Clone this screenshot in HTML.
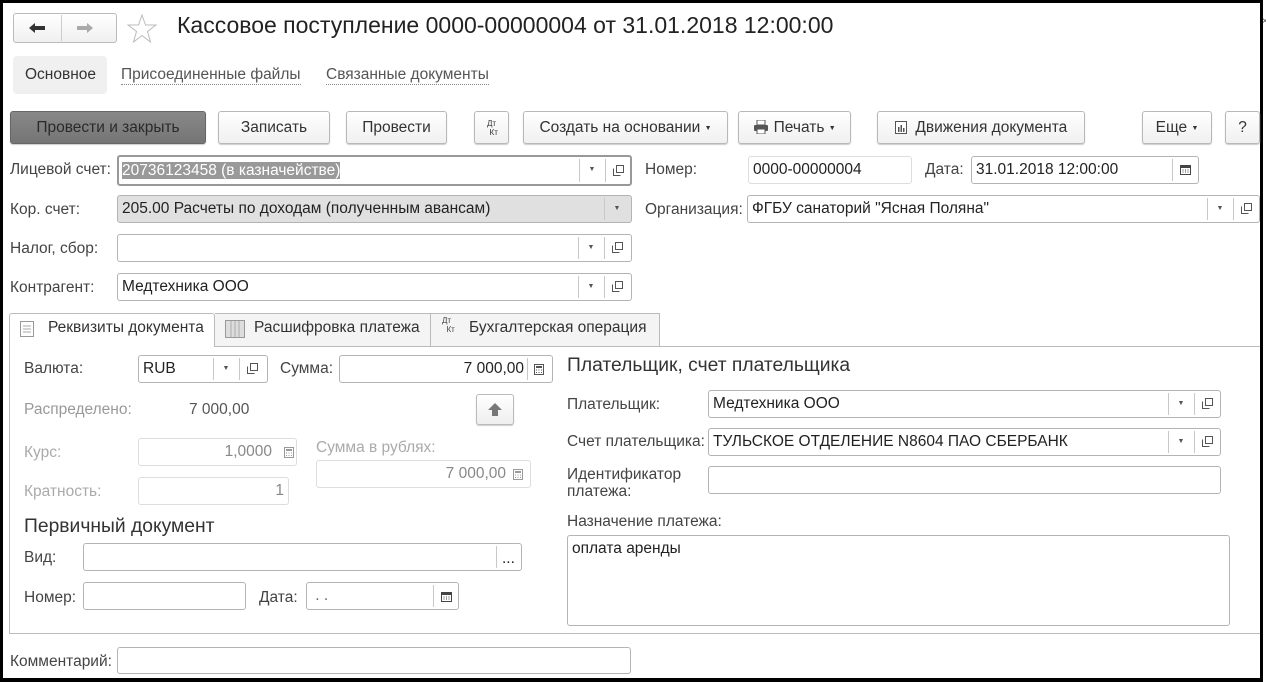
<!DOCTYPE html>
<html><head><meta charset="utf-8"><style>
*{box-sizing:border-box;margin:0;padding:0}
body{width:1266px;height:682px;position:relative;background:#fff;font-family:"Liberation Sans",Arial,sans-serif;font-size:15.5px;color:#333;overflow:hidden}
.a{position:absolute;white-space:nowrap}
.f{position:absolute;border:1px solid #b4b4b4;border-radius:3px;background:#fff;height:28px;line-height:26px;padding-left:4px;color:#222}
.f.dis{border-color:#ddd;color:#888}
.btn{position:absolute;border:1px solid #b8b8b8;border-radius:3px;background:linear-gradient(#fff,#f0f0f0);height:33px;top:111px;line-height:31px;text-align:center;color:#333;box-shadow:0 1px 1px #ccc}
.sep{position:absolute;top:2px;bottom:2px;border-left:1px solid #c8c8c8}
.dd{position:absolute;top:0;width:26px;height:26px;text-align:center;font-size:7px;color:#555;line-height:26px}
.cp{position:absolute;top:7px;width:11px;height:11px}
.lbl{position:absolute;color:#444}
.g{color:#999}
.ar{font-size:7px;vertical-align:2px}
</style></head><body>
<div class="a" style="left:0;top:0;width:1263px;height:3px;background:#000"></div>
<div class="a" style="left:0;top:0;width:3px;height:682px;background:#000"></div>
<div class="a" style="left:1260px;top:0;width:3px;height:682px;background:#000"></div>
<div class="a" style="left:0;top:678px;width:1263px;height:4px;background:#000"></div>
<div class="a" style="left:1262px;top:16px;font-size:10px;color:#555">×</div>

<div class="a" style="left:13px;top:13px;width:104px;height:30px;border:1px solid #bbb;border-radius:3px;background:linear-gradient(#fff,#f0f0f0)"></div>
<div class="a" style="left:61px;top:15px;height:26px;border-left:1px solid #ccc"></div>
<svg class="a" style="left:28px;top:22px" width="18" height="12" viewBox="0 0 18 12"><path d="M1 6l6-5v3h10v4H7v3z" fill="#333"/></svg>
<svg class="a" style="left:76px;top:22px" width="18" height="12" viewBox="0 0 18 12"><path d="M17 6l-6-5v3H1v4h10v3z" fill="#aaa"/></svg>
<svg class="a" style="left:127px;top:14px" width="30" height="29" viewBox="0 0 30 29"><polygon points="15,1 18.5,11 29,11 20.5,17.5 23.5,28 15,21.5 6.5,28 9.5,17.5 1,11 11.5,11" fill="none" stroke="#bbb" stroke-width="1"/></svg>
<div class="a" style="left:177px;top:12px;font-size:23px;color:#222">Кассовое поступление 0000-00000004 от 31.01.2018 12:00:00</div>

<div class="a" style="left:13px;top:56px;width:94px;height:38px;background:#f0f0f0;border-radius:4px"></div>
<div class="a" style="left:25px;top:66px;color:#333">Основное</div>
<div class="a" style="left:121px;top:66px;color:#555;border-bottom:1px dotted #888;line-height:18px">Присоединенные файлы</div>
<div class="a" style="left:326px;top:66px;color:#555;border-bottom:1px dotted #888;line-height:18px">Связанные документы</div>

<div class="btn" style="left:10px;width:196px;background:linear-gradient(#888,#757575);border-color:#666;color:#2a2a2a">Провести и закрыть</div>
<div class="btn" style="left:218px;width:112px">Записать</div>
<div class="btn" style="left:346px;width:101px">Провести</div>
<div class="btn" style="left:474px;width:35px;font-size:8px;line-height:9px;padding-top:7px">Дт<br>&nbsp;&nbsp;Кт</div>
<div class="btn" style="left:523px;width:205px">Создать на основании <span class="ar">&#9660;</span></div>
<div class="btn" style="left:738px;width:113px"><svg width="16" height="14" style="vertical-align:-2px" viewBox="0 0 16 14"><rect x="4" y="0" width="8" height="5" fill="#fff" stroke="#555"/><rect x="1" y="5" width="14" height="6" rx="1" fill="#555"/><rect x="4" y="9" width="8" height="5" fill="#fff" stroke="#555"/></svg> Печать <span class="ar">&#9660;</span></div>
<div class="btn" style="left:877px;width:208px"><svg width="12" height="13" style="vertical-align:-2px" viewBox="0 0 12 13"><rect x="0.5" y="0.5" width="11" height="12" fill="#fff" stroke="#555"/><rect x="3" y="6" width="1.5" height="5" fill="#555"/><rect x="5.5" y="4" width="1.5" height="7" fill="#555"/><rect x="8" y="7" width="1.5" height="4" fill="#555"/></svg>&nbsp; Движения документа</div>
<div class="btn" style="left:1142px;width:70px">Еще <span class="ar">&#9660;</span></div>
<div class="btn" style="left:1225px;width:35px">?</div>

<div class="lbl" style="left:10px;top:161px">Лицевой счет:</div>
<div class="f" style="left:117px;top:155px;width:515px;height:31px;border:2px solid #999;line-height:27px;padding-left:3px"><span style="background:#999;color:#fff">20736123458 (в казначействе)</span>
<div class="sep" style="left:460px"></div><div class="dd" style="left:460px">&#9660;</div><div class="sep" style="left:486px"></div>
<svg class="cp" style="left:494px;top:8px" viewBox="0 0 11 11"><path d="M3.5 .5h7v7h-7zM.5 3.5v7h7" fill="none" stroke="#555"/></svg></div>

<div class="lbl" style="left:645px;top:161px">Номер:</div>
<div class="f" style="left:748px;top:156px;width:164px;border-color:#ddd">0000-00000004</div>
<div class="lbl" style="left:925px;top:161px">Дата:</div>
<div class="f" style="left:971px;top:156px;width:228px">31.01.2018 12:00:00<div class="sep" style="left:200px"></div>
<svg class="a" style="left:208px;top:7px" width="11" height="11" viewBox="0 0 11 11"><rect x="0.5" y="1.5" width="10" height="9" fill="none" stroke="#444"/><rect x="0.5" y="1.5" width="10" height="2.5" fill="#444"/><path d="M2.5 6h1M5 6h1M7.5 6h1M2.5 8h1M5 8h1M7.5 8h1" stroke="#444"/></svg></div>

<div class="lbl" style="left:10px;top:201px">Кор. счет:</div>
<div class="f" style="left:117px;top:195px;width:515px;background:#e0e0e0">205.00 Расчеты по доходам (полученным авансам)<div class="sep" style="left:486px"></div><div class="dd" style="left:486px">&#9660;</div></div>
<div class="lbl" style="left:645px;top:201px">Организация:</div>
<div class="f" style="left:747px;top:195px;width:513px">ФГБУ санаторий "Ясная Поляна"<div class="sep" style="left:459px"></div><div class="dd" style="left:459px">&#9660;</div><div class="sep" style="left:485px"></div>
<svg class="cp" style="left:493px" viewBox="0 0 11 11"><path d="M3.5 .5h7v7h-7zM.5 3.5v7h7" fill="none" stroke="#555"/></svg></div>

<div class="lbl" style="left:10px;top:240px">Налог, сбор:</div>
<div class="f" style="left:117px;top:234px;width:515px"><div class="sep" style="left:460px"></div><div class="dd" style="left:460px">&#9660;</div><div class="sep" style="left:486px"></div>
<svg class="cp" style="left:494px" viewBox="0 0 11 11"><path d="M3.5 .5h7v7h-7zM.5 3.5v7h7" fill="none" stroke="#555"/></svg></div>

<div class="lbl" style="left:10px;top:279px">Контрагент:</div>
<div class="f" style="left:117px;top:273px;width:515px">Медтехника ООО<div class="sep" style="left:460px"></div><div class="dd" style="left:460px">&#9660;</div><div class="sep" style="left:486px"></div>
<svg class="cp" style="left:494px" viewBox="0 0 11 11"><path d="M3.5 .5h7v7h-7zM.5 3.5v7h7" fill="none" stroke="#555"/></svg></div>

<div class="a" style="left:215px;top:346px;width:1045px;border-top:1px solid #bbb"></div>
<div class="a" style="left:9px;top:313px;width:206px;height:34px;border:1px solid #bbb;border-bottom:none;background:#fff;border-radius:3px 3px 0 0"></div>
<div class="a" style="left:215px;top:313px;width:216px;height:33px;border:1px solid #bbb;border-left:none;border-bottom:none;background:#f4f4f4"></div>
<div class="a" style="left:431px;top:313px;width:229px;height:33px;border:1px solid #bbb;border-left:none;border-bottom:none;background:#f4f4f4"></div>
<svg class="a" style="left:20px;top:321px" width="14" height="16" viewBox="0 0 14 16"><rect x=".5" y=".5" width="13" height="15" fill="#fff" stroke="#999"/><path d="M3 5h8M3 8h8M3 11h8" stroke="#aaa"/></svg>
<div class="a" style="left:48px;top:319px;color:#333">Реквизиты документа</div>
<svg class="a" style="left:225px;top:320px" width="20" height="18" viewBox="0 0 20 18"><rect x=".5" y=".5" width="19" height="17" fill="#ddd" stroke="#999"/><path d="M6 1v16M10 1v16M14 1v16" stroke="#aaa"/></svg>
<div class="a" style="left:254px;top:319px;color:#333">Расшифровка платежа</div>
<div class="a" style="left:442px;top:316px;font-size:8px;line-height:9px;color:#444">Дт<br>&nbsp;&nbsp;Кт</div>
<div class="a" style="left:469px;top:319px;color:#333">Бухгалтерская операция</div>

<div class="a" style="left:9px;top:346px;height:288px;border-left:1px solid #bbb"></div>
<div class="a" style="left:9px;top:633px;width:1251px;border-top:1px solid #bbb"></div>

<div class="lbl" style="left:24px;top:360px">Валюта:</div>
<div class="f" style="left:138px;top:355px;width:130px">RUB<div class="sep" style="left:74px"></div><div class="dd" style="left:74px">&#9660;</div><div class="sep" style="left:100px"></div>
<svg class="cp" style="left:108px" viewBox="0 0 11 11"><path d="M3.5 .5h7v7h-7zM.5 3.5v7h7" fill="none" stroke="#555"/></svg></div>
<div class="lbl" style="left:280px;top:360px">Сумма:</div>
<div class="f" style="left:339px;top:355px;width:214px;text-align:right;padding-right:28px">7 000,00<div class="sep" style="left:187px"></div>
<svg class="a" style="left:194px;top:8px" width="10" height="11" viewBox="0 0 10 11"><rect x=".5" y=".5" width="9" height="10" fill="none" stroke="#555"/><rect x="2" y="2" width="6" height="2" fill="#555"/><path d="M2 6h1M4.5 6h1M7 6h1M2 8.5h1M4.5 8.5h1M7 8.5h1" stroke="#555"/></svg></div>

<div class="lbl g" style="left:24px;top:401px">Распределено:</div>
<div class="lbl" style="left:189px;top:401px;color:#555">7 000,00</div>
<div class="a" style="left:476px;top:394px;width:38px;height:31px;border:1px solid #bbb;border-radius:3px;background:linear-gradient(#fff,#eee);box-shadow:0 1px 1px #ccc"></div>
<svg class="a" style="left:487px;top:402px" width="16" height="15" viewBox="0 0 16 15"><path d="M8 1L1 8h4v6h6V8h4z" fill="#777"/></svg>

<div class="lbl" style="left:24px;top:444px;color:#aaa">Курс:</div>
<div class="f dis" style="left:138px;top:438px;width:159px;text-align:right;padding-right:24px">1,0000<svg class="a" style="left:145px;top:8px" width="10" height="11" viewBox="0 0 10 11"><rect x=".5" y=".5" width="9" height="10" fill="none" stroke="#999"/><rect x="2" y="2" width="6" height="2" fill="#999"/><path d="M2 6h1M4.5 6h1M7 6h1M2 8.5h1M4.5 8.5h1M7 8.5h1" stroke="#999"/></svg></div>
<div class="lbl" style="left:316px;top:439px;color:#aaa">Сумма в рублях:</div>
<div class="f dis" style="left:316px;top:460px;width:215px;text-align:right;padding-right:24px">7 000,00<svg class="a" style="left:196px;top:8px" width="10" height="11" viewBox="0 0 10 11"><rect x=".5" y=".5" width="9" height="10" fill="none" stroke="#999"/><rect x="2" y="2" width="6" height="2" fill="#999"/><path d="M2 6h1M4.5 6h1M7 6h1M2 8.5h1M4.5 8.5h1M7 8.5h1" stroke="#999"/></svg></div>
<div class="lbl" style="left:24px;top:483px;color:#aaa">Кратность:</div>
<div class="f dis" style="left:138px;top:477px;width:151px;text-align:right;padding-right:4px">1</div>

<div class="a" style="left:24px;top:516px;font-size:19.3px;color:#333">Первичный документ</div>
<div class="lbl" style="left:24px;top:549px">Вид:</div>
<div class="f" style="left:83px;top:543px;width:439px"><div class="sep" style="left:412px"></div><div class="a" style="left:418px;top:2px">...</div></div>
<div class="lbl" style="left:24px;top:589px">Номер:</div>
<div class="f" style="left:83px;top:582px;width:163px"></div>
<div class="lbl" style="left:259px;top:589px">Дата:</div>
<div class="f" style="left:306px;top:582px;width:153px;color:#666">&nbsp;. .<div class="sep" style="left:126px"></div>
<svg class="a" style="left:134px;top:8px" width="11" height="11" viewBox="0 0 11 11"><rect x="0.5" y="1.5" width="10" height="9" fill="none" stroke="#444"/><rect x="0.5" y="1.5" width="10" height="2.5" fill="#444"/><path d="M2.5 6h1M5 6h1M7.5 6h1M2.5 8h1M5 8h1M7.5 8h1" stroke="#444"/></svg></div>

<div class="a" style="left:567px;top:355px;font-size:19.3px;color:#333">Плательщик, счет плательщика</div>
<div class="lbl" style="left:567px;top:396px">Плательщик:</div>
<div class="f" style="left:708px;top:390px;width:513px">Медтехника ООО<div class="sep" style="left:459px"></div><div class="dd" style="left:459px">&#9660;</div><div class="sep" style="left:485px"></div>
<svg class="cp" style="left:493px" viewBox="0 0 11 11"><path d="M3.5 .5h7v7h-7zM.5 3.5v7h7" fill="none" stroke="#555"/></svg></div>
<div class="lbl" style="left:567px;top:433px">Счет плательщика:</div>
<div class="f" style="left:708px;top:428px;width:513px">ТУЛЬСКОЕ ОТДЕЛЕНИЕ N8604 ПАО СБЕРБАНК<div class="sep" style="left:459px"></div><div class="dd" style="left:459px">&#9660;</div><div class="sep" style="left:485px"></div>
<svg class="cp" style="left:493px" viewBox="0 0 11 11"><path d="M3.5 .5h7v7h-7zM.5 3.5v7h7" fill="none" stroke="#555"/></svg></div>
<div class="lbl" style="left:567px;top:466px;line-height:17px">Идентификатор<br>платежа:</div>
<div class="f" style="left:708px;top:466px;width:513px"></div>
<div class="lbl" style="left:567px;top:513px">Назначение платежа:</div>
<div class="f" style="left:567px;top:535px;width:663px;height:91px;line-height:20px;padding-top:3px">оплата аренды</div>

<div class="lbl" style="left:10px;top:653px">Комментарий:</div>
<div class="f" style="left:117px;top:647px;width:514px;height:27px"></div>
</body></html>
